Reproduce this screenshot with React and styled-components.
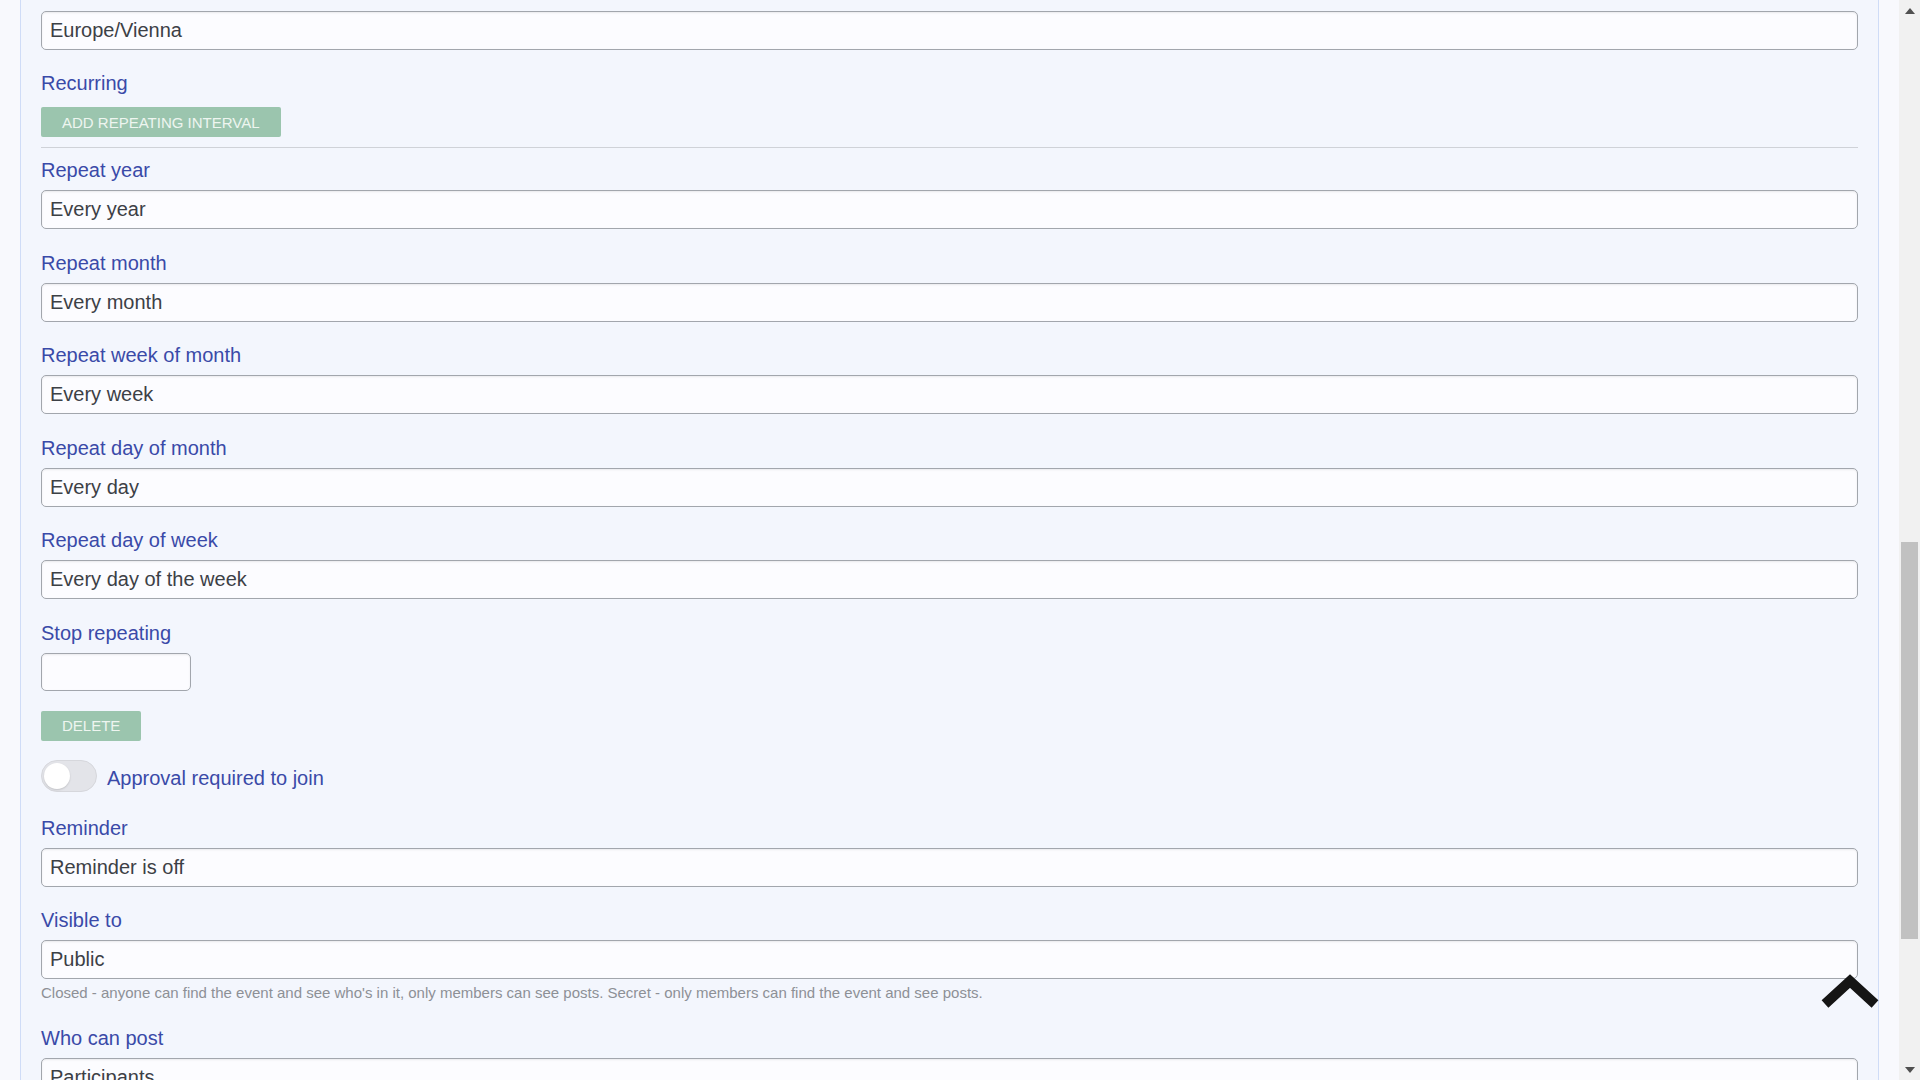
import styled, { createGlobalStyle } from "styled-components"

const GlobalStyle = createGlobalStyle`
  html, body {
    margin: 0;
    padding: 0;
    height: 100%;
    overflow: hidden;
    background: #f8f9fd;
    font-family: "Liberation Sans", Arial, sans-serif;
  }
  * { box-sizing: border-box; }
`

const Page = styled.div`
  display: flex;
  height: 100vh;
  width: 100vw;
`

const Main = styled.main`
  flex: 1;
  padding: 0 20px;
  overflow: hidden;
`

const Panel = styled.section`
  background: #f3f6fd;
  border-left: 1px solid #cfdcf7;
  border-right: 1px solid #cfdcf7;
  padding: 11px 20px 0;
  min-height: 100%;
  display: flex;
  flex-direction: column;
`

const Field = styled.div`
  display: flex;
  flex-direction: column;
  margin-bottom: ${(p) => p.$after || "21.5px"};
`

const Label = styled.label`
  font-size: 20px;
  line-height: 24px;
  color: #3a4aa8;
  margin-bottom: 8px;
`

const Input = styled.input`
  height: ${(p) => p.$height || "39px"};
  width: ${(p) => p.$width || "100%"};
  border: 1px solid #a2a6ad;
  border-radius: 5px;
  background: #fcfcff;
  box-shadow: inset 0 1px 2px rgba(0, 0, 0, 0.08);
  padding: 0 8px;
  font-family: "Liberation Sans", Arial, sans-serif;
  font-size: 20px;
  color: #3c4046;
  outline: none;
`

const Button = styled.button`
  align-self: flex-start;
  height: 30px;
  padding: 0 21px;
  border: none;
  border-radius: 2px;
  background: #9bc5ae;
  color: #eef5f0;
  font-family: "Liberation Sans", Arial, sans-serif;
  font-size: 15px;
  text-transform: uppercase;
  margin-top: ${(p) => p.$top || "0"};
  margin-bottom: ${(p) => p.$after || "0"};
`

const Divider = styled.hr`
  border: none;
  border-top: 1px solid #cfd2d8;
  margin: 10px 0;
  height: 0;
`

const ToggleRow = styled.div`
  display: flex;
  align-items: center;
  gap: 10px;
  height: 32px;
  margin-bottom: 24px;
`

const Track = styled.span`
  width: 56px;
  height: 32px;
  border-radius: 16px;
  background: #e3e4e9;
  border: 1px solid #d6d7dc;
  display: flex;
  align-items: center;
  padding-left: 2px;
`

const Knob = styled.span`
  width: 26px;
  height: 26px;
  border-radius: 50%;
  background: #ffffff;
  box-shadow: 0 1px 2px rgba(0, 0, 0, 0.15);
`

const ToggleText = styled.span`
  font-size: 20px;
  color: #3a4aa8;
  margin-top: 5px;
`

const Help = styled.p`
  margin: 5px 0 0;
  font-size: 15px;
  line-height: 18px;
  color: #8d9096;
`

const Scrollbar = styled.aside`
  width: 21px;
  background: #f1f1f1;
  display: flex;
  flex-direction: column;
  align-items: center;
`

const Arrow = styled.div`
  height: 21px;
  display: flex;
  align-items: center;
  justify-content: center;
`

const ScrollTrack = styled.div`
  flex: 1;
  width: 100%;
  padding: 0 2px;
`

const Thumb = styled.div`
  margin-top: 521px;
  height: 397px;
  background: #c1c1c1;
`

const BackToTop = styled.svg`
  position: fixed;
  left: 1818px;
  top: 972px;
`

const repeatFields = [
  ["Repeat year", "Every year"],
  ["Repeat month", "Every month"],
  ["Repeat week of month", "Every week"],
  ["Repeat day of month", "Every day"],
  ["Repeat day of week", "Every day of the week"],
]

export default function App() {
  return (
    <Page>
      <GlobalStyle />
      <Main>
        <Panel>
          <Field $after="20.5px">
            <Input readOnly defaultValue="Europe/Vienna" />
          </Field>

          <Label>Recurring</Label>
          <Button $top="4.5px">Add repeating interval</Button>
          <Divider />

          {repeatFields.map(([label, value]) => (
            <Field key={label}>
              <Label>{label}</Label>
              <Input readOnly defaultValue={value} />
            </Field>
          ))}

          <Field $after="20px">
            <Label>Stop repeating</Label>
            <Input readOnly $width="150px" $height="38px" />
          </Field>
          <Button $after="19px">Delete</Button>

          <ToggleRow>
            <Track>
              <Knob />
            </Track>
            <ToggleText>Approval required to join</ToggleText>
          </ToggleRow>

          <Field $after="21px">
            <Label>Reminder</Label>
            <Input readOnly defaultValue="Reminder is off" />
          </Field>

          <Field $after="24px">
            <Label>Visible to</Label>
            <Input readOnly defaultValue="Public" />
            <Help>
              Closed - anyone can find the event and see who's in it, only members can see posts.
              Secret - only members can find the event and see posts.
            </Help>
          </Field>

          <Field>
            <Label>Who can post</Label>
            <Input readOnly defaultValue="Participants" />
          </Field>
        </Panel>
      </Main>

      <Scrollbar>
        <Arrow>
          <svg width="10" height="6" viewBox="0 0 10 6">
            <path d="M0 6 L5 0 L10 6 Z" fill="#505050" />
          </svg>
        </Arrow>
        <ScrollTrack>
          <Thumb />
        </ScrollTrack>
        <Arrow>
          <svg width="10" height="6" viewBox="0 0 10 6">
            <path d="M0 0 L5 6 L10 0 Z" fill="#505050" />
          </svg>
        </Arrow>
      </Scrollbar>

      <BackToTop width="64" height="40" viewBox="0 0 64 40">
        <polyline
          points="7,32 32,9 57,32"
          fill="none"
          stroke="#151515"
          strokeWidth="10"
          strokeLinejoin="miter"
        />
      </BackToTop>
    </Page>
  )
}
